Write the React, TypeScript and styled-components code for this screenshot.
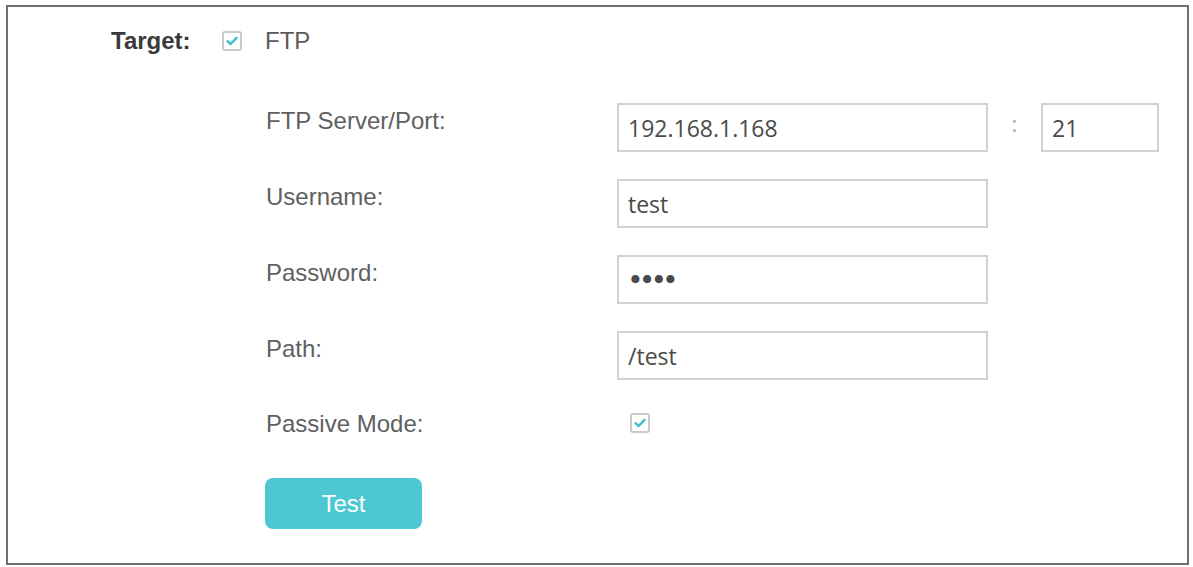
import React from "react";
import styled, { createGlobalStyle } from "styled-components";

const GlobalStyle = createGlobalStyle`
  html, body {
    margin: 0;
    padding: 0;
    background: #fff;
  }
  body {
    font-family: "Liberation Sans", Arial, sans-serif;
  }
`;

const Check: React.FC<{ checked?: boolean }> = ({ checked = true }) => (
  <StyledCheck>
    {checked && (
      <svg width="12" height="10" viewBox="0 0 12 10">
        <path
          d="M1.5 5.2 L4.6 8 L10.5 1.8"
          fill="none"
          stroke="#3fbfcc"
          strokeWidth="2.4"
          strokeLinecap="round"
          strokeLinejoin="round"
        />
      </svg>
    )}
  </StyledCheck>
);

const App: React.FC = () => {
  return (
    <>
      <GlobalStyle />
      <StyledFrame>
        <StyledTargetRow>
          <StyledTargetLabel>Target:</StyledTargetLabel>
          <Check />
          <StyledTargetName>FTP</StyledTargetName>
        </StyledTargetRow>

        <StyledForm>
          <StyledRow>
            <StyledLabel>FTP Server/Port:</StyledLabel>
            <StyledInput defaultValue="192.168.1.168" readOnly />
            <StyledColon>:</StyledColon>
            <StyledInput $width={118} defaultValue="21" readOnly />
          </StyledRow>
          <StyledRow>
            <StyledLabel>Username:</StyledLabel>
            <StyledInput defaultValue="test" readOnly />
          </StyledRow>
          <StyledRow>
            <StyledLabel>Password:</StyledLabel>
            <StyledInput type="password" $password defaultValue="test" readOnly />
          </StyledRow>
          <StyledRow>
            <StyledLabel>Path:</StyledLabel>
            <StyledInput defaultValue="/test" readOnly />
          </StyledRow>
          <StyledCheckRow>
            <StyledLabel>Passive Mode:</StyledLabel>
            <StyledCheckCell>
              <Check />
            </StyledCheckCell>
          </StyledCheckRow>
          <StyledTestButton>Test</StyledTestButton>
        </StyledForm>
      </StyledFrame>
    </>
  );
};

export default App;

const StyledFrame = styled.div`
  box-sizing: border-box;
  margin: 5px 0 0 6px;
  width: 1183px;
  height: 560px;
  border: 2px solid #707070;
  padding: 20px 0 0 0;
`;

const StyledTargetRow = styled.div`
  display: flex;
  align-items: center;
  height: 28px;
  padding-left: 103px;
`;

const StyledTargetLabel = styled.span`
  width: 81px;
  font-size: 24px;
  line-height: 28px;
  font-weight: bold;
  color: #3a3a3a;
  margin-right: 30px;
  white-space: nowrap;
`;

const StyledTargetName = styled.span`
  font-size: 24px;
  line-height: 28px;
  color: #5a5a5a;
  margin-left: 23px;
`;

const StyledCheck = styled.span`
  box-sizing: border-box;
  display: inline-flex;
  align-items: center;
  justify-content: center;
  width: 20px;
  height: 20px;
  border: 2px solid #c9c9c9;
  border-radius: 3px;
  background: #fff;
`;

const StyledForm = styled.div`
  display: flex;
  flex-direction: column;
  align-items: flex-start;
  padding: 48px 0 0 258px;
`;

const StyledRow = styled.div`
  display: flex;
  align-items: flex-start;
  height: 49px;
  margin-bottom: 27px;
`;

const StyledCheckRow = styled.div`
  display: flex;
  align-items: flex-start;
  margin-top: -1px;
  height: 28px;
`;

const StyledLabel = styled.span`
  width: 351px;
  padding-top: 4px;
  font-size: 24px;
  line-height: 28px;
  color: #606060;
  white-space: nowrap;
`;

const StyledInput = styled.input<{ $width?: number; $password?: boolean }>`
  box-sizing: border-box;
  width: ${(p) => p.$width ?? 371}px;
  height: 49px;
  margin: 0;
  padding: 0 9px;
  border: 2px solid #d2d2d2;
  border-radius: 0;
  background: #fff;
  font-family: ${(p) =>
    p.$password
      ? `"DejaVu Sans", sans-serif`
      : `"Open Sans", "Noto Sans", sans-serif`};
  font-size: ${(p) => (p.$password ? "23px" : "23px")};
  font-weight: ${(p) => (p.$password ? "bold" : "normal")};
  color: #4a4a4a;
  outline: none;
  letter-spacing: ${(p) => (p.$password ? "-3px" : "0")};
`;

const StyledColon = styled.span`
  width: 53px;
  text-align: center;
  padding-top: 6px;
  font-family: "Open Sans", "Noto Sans", sans-serif;
  font-size: 22px;
  line-height: 28px;
  color: #aaa;
`;

const StyledCheckCell = styled.div`
  padding: 7px 0 0 13px;
  display: flex;
`;

const StyledTestButton = styled.button`
  margin-top: 44px;
  margin-left: -1px;
  width: 157px;
  height: 51px;
  border: none;
  border-radius: 8px;
  background: #4cc7d3;
  color: #fff;
  font-family: "Liberation Sans", Arial, sans-serif;
  font-size: 24px;
  cursor: pointer;
`;
